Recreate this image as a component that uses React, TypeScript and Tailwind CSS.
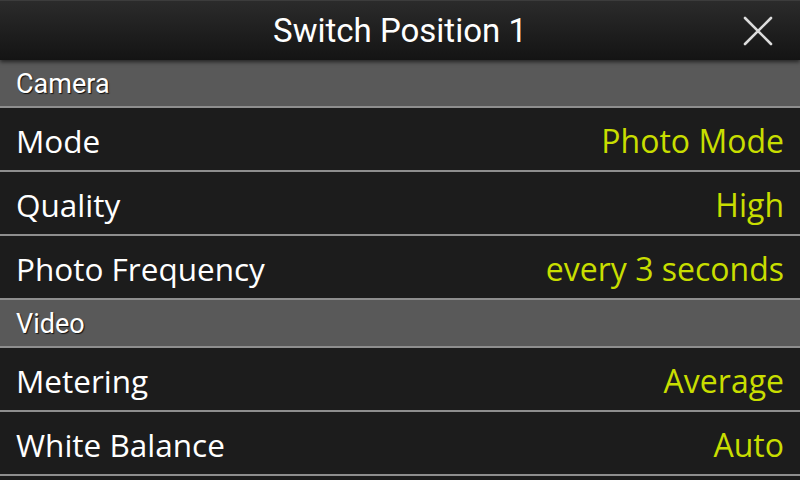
import React from 'react';

interface Setting {
  label: string;
  value: string;
}

interface Section {
  title: string;
  items: Setting[];
}

const sections: Section[] = [
  {
    title: 'Camera',
    items: [
      { label: 'Mode', value: 'Photo Mode' },
      { label: 'Quality', value: 'High' },
      { label: 'Photo Frequency', value: 'every 3 seconds' },
    ],
  },
  {
    title: 'Video',
    items: [
      { label: 'Metering', value: 'Average' },
      { label: 'White Balance', value: 'Auto' },
    ],
  },
];

const SectionHeader: React.FC<{ title: string }> = ({ title }) => (
  <div className="h-[48px] flex items-center px-4 pt-[3px] bg-[#595959] border-b-2 border-[#8e8e8e]">
    <span className="text-[27px] text-white font-['Roboto',sans-serif] [text-shadow:1px_1px_1px_rgba(0,0,0,0.8)]">{title}</span>
  </div>
);

const SettingRow: React.FC<{ item: Setting }> = ({ item }) => (
  <div className="h-[64px] flex items-center justify-between px-4 pt-[4px] bg-[#1c1c1c] border-b-2 border-[#8e8e8e] font-['Open_Sans',sans-serif]">
    <span className="text-[31.5px] text-white">{item.label}</span>
    <span className="text-[32px] text-[#c8de00]">{item.value}</span>
  </div>
);

export default function App() {
  return (
    <div className="w-[800px] h-[480px] overflow-hidden bg-[#1c1c1c] font-['Roboto',sans-serif]">
      {/* Title bar */}
      <div className="relative h-[60px] flex items-center justify-center bg-gradient-to-b from-[#2b2b2b] to-[#141414] border-t border-[#3c3c3c] shadow-[0_2px_4px_rgba(0,0,0,0.6)] z-10">
        <span className="text-[33px] text-white">Switch Position 1</span>
        <button className="absolute right-[26px] top-[14px] w-[32px] h-[32px] flex items-center justify-center">
          <svg width="30" height="30" viewBox="0 0 30 30" fill="none" stroke="#dcdcdc" strokeWidth={2.6} strokeLinecap="round">
            <path d="M2 2L28 28M28 2L2 28" />
          </svg>
        </button>
      </div>

      {sections.map((section) => (
        <div key={section.title}>
          <SectionHeader title={section.title} />
          {section.items.map((item) => (
            <SettingRow key={item.label} item={item} />
          ))}
        </div>
      ))}
    </div>
  );
}
